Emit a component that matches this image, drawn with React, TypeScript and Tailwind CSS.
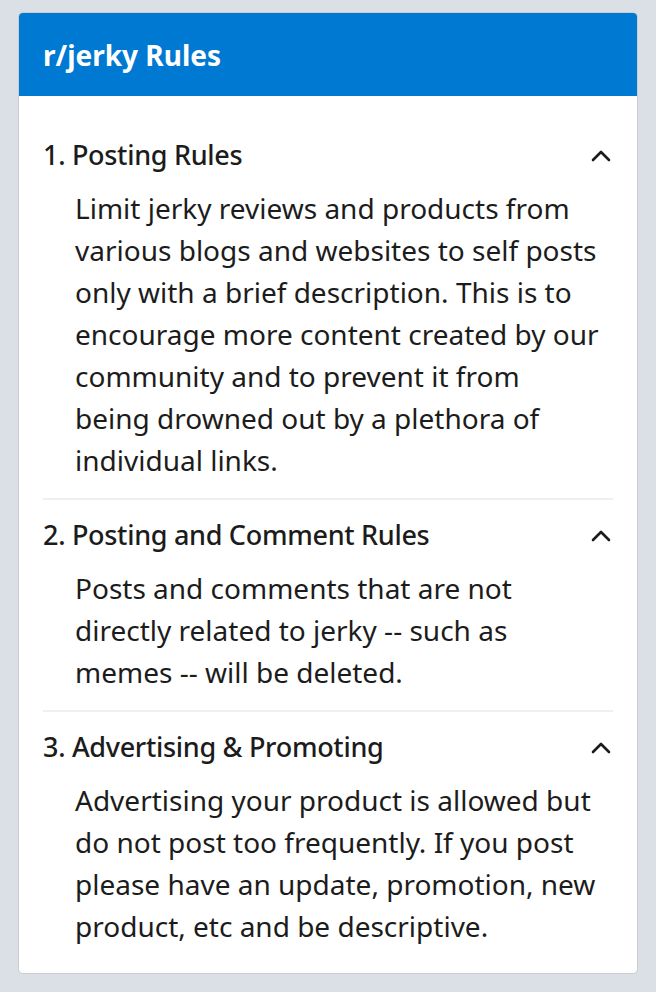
import React from "react";

const rules = [
  {
    title: "1. Posting Rules",
    body: "Limit jerky reviews and products from various blogs and websites to self posts only with a brief description. This is to encourage more content created by our community and to prevent it from being drowned out by a plethora of individual links.",
  },
  {
    title: "2. Posting and Comment Rules",
    body: "Posts and comments that are not directly related to jerky -- such as memes -- will be deleted.",
  },
  {
    title: "3. Advertising & Promoting",
    body: "Advertising your product is allowed but do not post too frequently. If you post please have an update, promotion, new product, etc and be descriptive.",
  },
];

const ChevronUp = () => (
  <svg width="20" height="14" viewBox="0 0 20 14" fill="none" className="shrink-0">
    <path d="M2 12 L10 4 L18 12" stroke="#1c1c1c" strokeWidth="2.6" strokeLinecap="round" strokeLinejoin="round" />
  </svg>
);

export default function App() {
  return (
    <div className="min-h-screen bg-[#dae0e6] px-[18px] pt-[12px] pb-[20px] font-['Noto_Sans',sans-serif] text-[#1c1c1c]">
      <div className="overflow-hidden rounded-[5px] border border-[#cccccc] bg-white">
        <div className="flex h-[83px] items-center bg-[#0079d3] px-[24px]">
          <h2 className="text-[28px] font-bold text-white">r/jerky Rules</h2>
        </div>
        <div className="px-[24px] pt-[24px] pb-[9px]">
          {rules.map((r, i) => (
            <div key={i} className={`py-[17px] ${i > 0 ? "border-t-2 border-[#edeff1]" : ""}`}>
              <div className="flex h-[36px] items-center justify-between">
                <span className="text-[27px] font-medium tracking-[-0.3px]">{r.title}</span>
                <span className="mr-[2px]">
                  <ChevronUp />
                </span>
              </div>
              <p className="mt-[14px] pl-[32px] pr-[13px] text-[28px] leading-[42px]">{r.body}</p>
            </div>
          ))}
        </div>
      </div>
    </div>
  );
}
